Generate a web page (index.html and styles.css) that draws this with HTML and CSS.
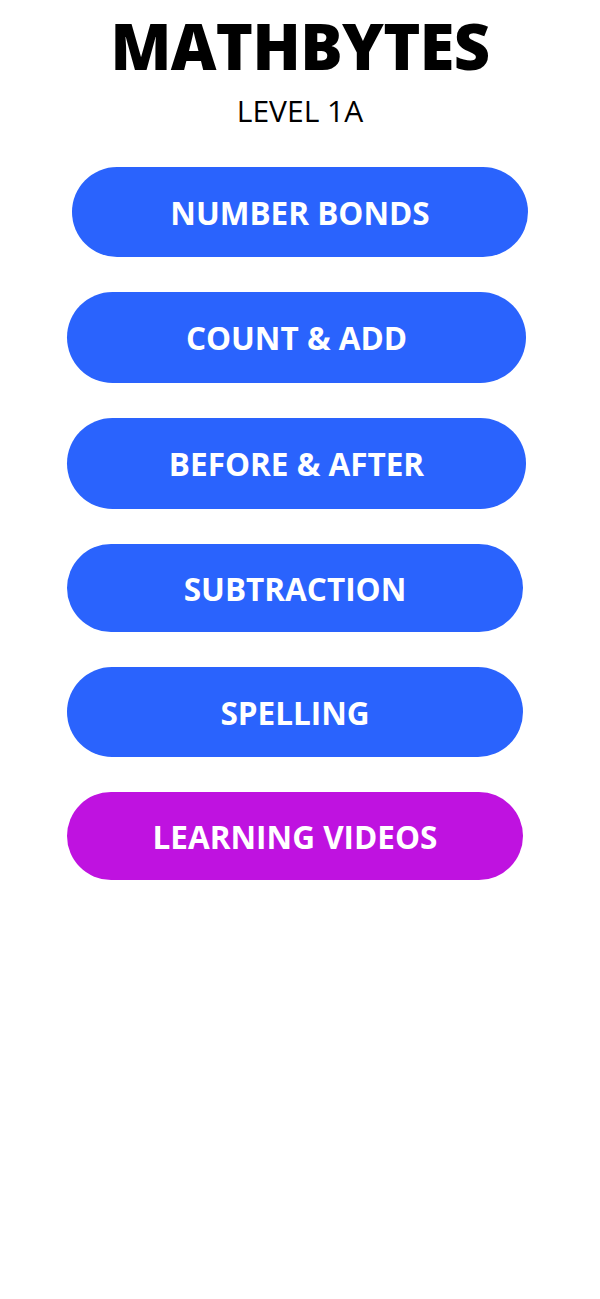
FILE: index.html
```html
<!DOCTYPE html>
<html>
<head>
<meta charset="utf-8">
<link rel="stylesheet" href="styles.css">
</head>
<body>
<main class="page">
  <header class="header">
    <h1 class="title">MATHBYTES</h1>
    <p class="level">LEVEL 1A</p>
  </header>
  <nav class="menu">
    <a class="btn btn-blue btn-first">NUMBER BONDS</a>
    <a class="btn btn-blue btn-tall">COUNT &amp; ADD</a>
    <a class="btn btn-blue btn-tall">BEFORE &amp; AFTER</a>
    <a class="btn btn-blue btn-short">SUBTRACTION</a>
    <a class="btn btn-blue">SPELLING</a>
    <a class="btn btn-purple btn-short">LEARNING VIDEOS</a>
  </nav>
</main>
</body>
</html>
```
FILE: styles.css
```css
html, body {
  margin: 0;
  padding: 0;
  background: #ffffff;
}
body {
  font-family: "Open Sans", "Noto Sans", sans-serif;
  color: #000;
}
.page {
  width: 600px;
  min-height: 1299px;
}
.header {
  display: flex;
  flex-direction: column;
  align-items: center;
  padding-top: 14px;
}
.title {
  margin: 0;
  font-size: 63px;
  line-height: 63px;
  font-weight: 800;
  letter-spacing: -0.6px;
}
.level {
  margin: 19px 0 0;
  font-size: 30px;
  line-height: 29px;
  font-weight: 400;
}
.menu {
  display: flex;
  flex-direction: column;
  gap: 35px;
  padding: 42px 0 0 67px;
}
.btn {
  display: flex;
  align-items: center;
  justify-content: center;
  width: 456px;
  height: 90px;
  border-radius: 46px;
  color: #ffffff;
  font-size: 31.5px;
  font-weight: 700;
  text-decoration: none;
}
.btn-first {
  margin-left: 5px;
}
.btn-tall {
  height: 91px;
  width: 459px;
}
.btn-short {
  height: 88px;
}
.btn-blue {
  background: #2a63fd;
}
.btn-purple {
  background: #bf12e0;
}
```
